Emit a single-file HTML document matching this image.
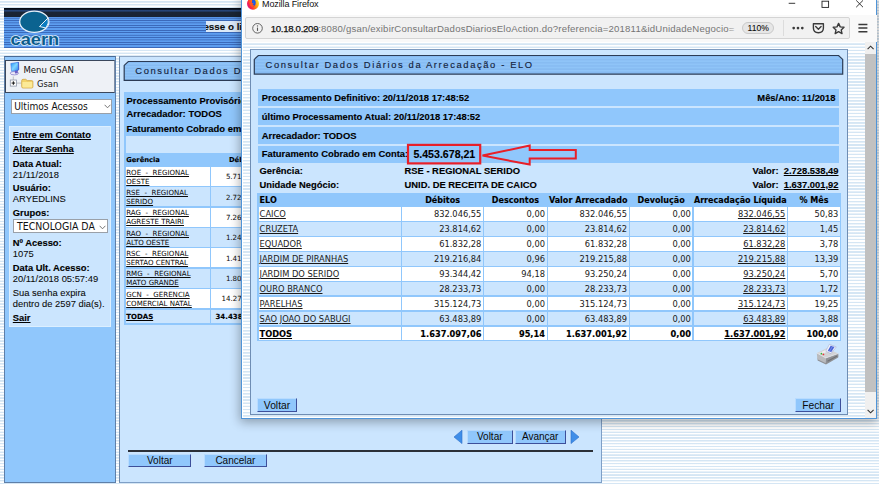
<!DOCTYPE html>
<html lang="pt-BR"><head><meta charset="utf-8"><title>Consultar Dados Diários da Arrecadação - ELO</title>
<style>
*{box-sizing:border-box;margin:0;padding:0}
html,body{width:879px;height:492px;overflow:hidden;background:#fff}
body{position:relative;font-family:"Liberation Sans", Arial, sans-serif;font-size:9.4px;color:#000;line-height:1}
.abs{position:absolute}
.t{position:absolute;white-space:nowrap;line-height:1}
.b{font-weight:bold;-webkit-text-stroke:0.12px currentColor}
.u{text-decoration:underline;text-decoration-thickness:0.7px;text-underline-offset:1px}
.stripe{background:repeating-linear-gradient(to bottom,#ffffff 0,#ffffff 1.0px,#d5e6f4 1.45px,#d5e6f4 2.4px,#ffffff 2.85px)}
.stripe2{background:repeating-linear-gradient(to bottom,#ffffff 0,#ffffff 1.15px,#d5e6f4 1.6px,#d5e6f4 2.7px,#ffffff 3.15px)}
.hstripe{background:repeating-linear-gradient(to bottom,#5d9ef0 0,#5d9ef0 1.15px,#3b69ba 1.5px,#3b69ba 2.1px,#5d9ef0 2.43px)}
.tstripe{background:repeating-linear-gradient(to bottom,#8fc4f8 0,#8fc4f8 1.6px,#80b5ee 2.0px,#80b5ee 2.6px,#8fc4f8 2.9px)}
.btn{position:absolute;background:#90c7fc;border:1px solid;border-color:#b9dcff #3d4f9a #3d4f9a #b9dcff;text-align:center;color:#0a0a0a;white-space:nowrap}
.vd{font-family:"DejaVu Sans", Verdana, sans-serif}
.u2{text-decoration:underline;text-decoration-thickness:0.6px;text-underline-offset:0.8px}
.s2{}
.cell{position:absolute;overflow:hidden;white-space:nowrap}
</style></head>
<body>
<div class="abs stripe" style="left:0;top:0;width:879px;height:484px"></div>
<div class="abs hstripe" style="left:4.3px;top:8.6px;width:300px;height:39.2px"></div>
<div class="abs" style="left:4.30px;top:8.30px;width:300.00px;height:8.30px;background:linear-gradient(to bottom,#05080e 0,#0a1220 1.4px,#27467a 2.2px,#24406e 3.2px,#1a2535 4.2px,#192333 100%);"></div>
<svg class="abs" style="left:4px;top:8px" width="70" height="42" viewBox="0 0 70 42">
<ellipse cx="30.3" cy="13.8" rx="14.6" ry="10.6" fill="#0b6390" stroke="#e8f2fb" stroke-width="1.3"/>
<path d="M35.5 18.5 L44 10 Q45.5 15 42 20 Z" fill="#0a7cc0" stroke="#e8f2fb" stroke-width="1"/>
<text x="6.6" y="36.8" font-family="Liberation Sans, Arial, sans-serif" font-weight="bold" font-size="16" fill="#0b5c8c" stroke="#dfeefa" stroke-width="1.6" paint-order="stroke" textLength="48.6" lengthAdjust="spacingAndGlyphs">caern</text>
</svg>
<div class="abs" style="left:205.9px;top:21.2px;width:60px;height:10.7px;background:#dce9f8;overflow:hidden"><div class="t b" style="left:-15.0px;top:1.10px;font-size:9.8px;color:#0c0c0c">Acesse o link abaixo</div></div>
<div class="abs" style="left:4.30px;top:56.30px;width:111.30px;height:427.00px;background:#90c7fc;border:1px solid #5f7fa8;border-top-color:#4a6a95"></div>
<div class="abs" style="left:5.30px;top:59.60px;width:109.30px;height:33.20px;background:#eef1f6;border:1px solid #3a475c;border-right-color:#7f8ea6"></div>
<div class="t  vd" style="left:23.50px;top:66.40px;font-size:8.5px;color:#111">Menu GSAN</div>
<div class="t  vd" style="left:37.00px;top:80.39px;font-size:8.4px;color:#111">Gsan</div>
<svg class="abs" style="left:8px;top:61px" width="14" height="16" viewBox="0 0 14 16">
<defs><linearGradient id="scr" x1="0" y1="0" x2="1" y2="1"><stop offset="0" stop-color="#1f8ff5"/><stop offset="0.5" stop-color="#7fd6ff"/><stop offset="1" stop-color="#2f86ee"/></linearGradient></defs>
<ellipse cx="6.4" cy="12.2" rx="4.1" ry="1.7" fill="#ecebf8" stroke="#7a70c4" stroke-width="0.7"/>
<path d="M6.6 9.3 L9.6 8.6 L9.8 12.2 L7 12.6Z" fill="#6a5fc4"/>
<path d="M8.6 1.6 L11 1.1 L11.2 8.6 L9.2 10.6 Z" fill="#4f47b4"/>
<path d="M2.8 2.5 L10.2 1.3 L10.3 9 L3.6 10.3 Z" fill="url(#scr)" stroke="#3a78e6" stroke-width="0.6"/>
</svg>
<svg class="abs" style="left:8px;top:76px" width="28" height="15" viewBox="0 0 28 15">
<path d="M5.3 0.5 V4 M8.6 7.1 H13.4" stroke="#a8a8a8" stroke-width="0.7" fill="none"/>
<rect x="2.3" y="4" width="6.1" height="6.1" fill="#fff" stroke="#8d95a8" stroke-width="0.8"/>
<path d="M3.6 7.05 H7.1 M5.35 5.3 V8.8" stroke="#111" stroke-width="1"/>
<path d="M13.7 4.6 Q13.7 3.3 15 3.3 H17.8 L19.2 4.6 H23.7 Q24.9 4.6 24.9 5.8 V10.8 Q24.9 12 23.7 12 H15 Q13.7 12 13.7 10.8 Z" fill="#f3d36a" stroke="#d0a646" stroke-width="0.8"/>
<path d="M14.4 5.9 H24.2 V10.8 Q24.2 11.4 23.6 11.4 H15 Q14.4 11.4 14.4 10.8Z" fill="#fcea98"/>
</svg>
<div class="abs" style="left:10.70px;top:98.50px;width:101.80px;height:15.30px;background:#fff;border:1px solid #9aa0a8"></div>
<div class="t " style="left:14.20px;top:101.95px;font-size:10.1px;font-family:'DejaVu Sans Condensed','DejaVu Sans',sans-serif;font-stretch:condensed;color:#111">Ultimos Acessos</div>
<svg class="abs" style="left:103.5px;top:104px" width="7" height="5" viewBox="0 0 7 5"><path d="M0.6 0.8 L3.5 3.8 L6.4 0.8" fill="none" stroke="#666" stroke-width="0.9"/></svg>
<div class="abs" style="left:9.30px;top:125.70px;width:101.80px;height:200.90px;background:#cbe5fe;border:1px solid #dcefff"></div>
<div class="t b u" style="left:12.80px;top:130.04px;font-size:9.4px;">Entre em Contato</div>
<div class="t b u" style="left:12.80px;top:144.34px;font-size:9.4px;">Alterar Senha</div>
<div class="t b" style="left:12.80px;top:158.54px;font-size:9.4px;">Data Atual:</div>
<div class="t " style="left:12.80px;top:169.64px;font-size:9.4px;color:#0c0c0c;-webkit-text-stroke:0.08px #0c0c0c">21/11/2018</div>
<div class="t b" style="left:12.80px;top:183.04px;font-size:9.4px;">Usuário:</div>
<div class="t " style="left:12.80px;top:194.14px;font-size:9.4px;color:#0c0c0c;-webkit-text-stroke:0.08px #0c0c0c">ARYEDLINS</div>
<div class="t b" style="left:12.80px;top:208.44px;font-size:9.4px;">Grupos:</div>
<div class="abs" style="left:12.50px;top:218.60px;width:95.40px;height:14.90px;background:#fff;border:1px solid #9aa0a8"></div>
<div class="t " style="left:17.00px;top:220.75px;font-size:10.45px;font-family:'DejaVu Sans Condensed','DejaVu Sans',sans-serif;font-stretch:condensed;color:#111">TECNOLOGIA DA</div>
<svg class="abs" style="left:99.3px;top:224.5px" width="7" height="5" viewBox="0 0 7 5"><path d="M0.6 0.8 L3.5 3.8 L6.4 0.8" fill="none" stroke="#666" stroke-width="0.9"/></svg>
<div class="t b" style="left:12.80px;top:238.14px;font-size:9.4px;">Nº Acesso:</div>
<div class="t " style="left:12.80px;top:249.14px;font-size:9.4px;color:#0c0c0c;-webkit-text-stroke:0.08px #0c0c0c">1075</div>
<div class="t b" style="left:12.80px;top:262.84px;font-size:9.4px;">Data Ult. Acesso:</div>
<div class="t " style="left:12.80px;top:273.94px;font-size:9.4px;color:#0c0c0c;-webkit-text-stroke:0.08px #0c0c0c">20/11/2018 05:57:49</div>
<div class="t " style="left:12.80px;top:288.34px;font-size:9.4px;color:#0c0c0c;-webkit-text-stroke:0.08px #0c0c0c">Sua senha expira</div>
<div class="t " style="left:12.80px;top:299.44px;font-size:9.4px;color:#0c0c0c;-webkit-text-stroke:0.08px #0c0c0c">dentro de 2597 dia(s).</div>
<div class="t b u" style="left:12.80px;top:313.14px;font-size:9.4px;">Sair</div>
<div class="abs" style="left:119.10px;top:56.30px;width:482.50px;height:426.60px;background:#cbe5fe;border:1px solid #7f9fc6;border-top-color:#8fa8c6;border-left-color:#6f88a8"></div>
<svg class="abs" style="left:123px;top:60px" width="200" height="22" viewBox="0 0 200 22">
<defs><pattern id="ts" width="10" height="2.9" patternUnits="userSpaceOnUse"><rect width="10" height="2.9" fill="#8fc4f8"/><rect y="1.8" width="10" height="0.9" fill="#80b5ee"/></pattern></defs>
<path d="M1.2 20.3 V5.4 L5.3 1.5 H200 V20.3 Z" fill="url(#ts)" stroke="#2b3b55" stroke-width="1.2"/>
</svg>
<div class="t " style="left:135.30px;top:66.34px;font-size:9.4px;letter-spacing:1.62px;color:#14233d;-webkit-text-stroke:0.15px #14233d">Consultar Dados Diários da Arrecadação</div>
<div class="abs" style="left:124.20px;top:92.30px;width:200.00px;height:43.40px;background:#90c7fc;"></div>
<div class="t b" style="left:126.50px;top:96.10px;font-size:9.45px;">Processamento Provisório: 21/11/2018</div>
<div class="t b" style="left:126.50px;top:109.30px;font-size:9.45px;">Arrecadador: TODOS</div>
<div class="t b" style="left:126.50px;top:124.10px;font-size:9.45px;">Faturamento Cobrado em Conta:</div>
<div class="abs" style="left:124.20px;top:135.70px;width:200.00px;height:17.70px;background:#90c7fc;"></div>
<div class="abs" style="left:125.50px;top:136.30px;width:200.00px;height:16.60px;background:#cde6fe;"></div>
<div class="abs" style="left:124.20px;top:153.30px;width:200.00px;height:171.60px;background:#90c7fc;"></div>
<div class="t b vd" style="left:126.20px;top:157.29px;font-size:6.75px;">Gerência</div>
<div class="t b vd" style="left:229.00px;top:157.29px;font-size:6.75px;">Débitos</div>
<div class="abs" style="left:125.60px;top:167.00px;width:84.20px;height:18.90px;background:#fff;"></div>
<div class="abs" style="left:211.00px;top:167.00px;width:120.00px;height:18.90px;background:#fff;"></div>
<div class="t u2 vd" style="left:126.20px;top:168.73px;font-size:7.05px;color:#0a0a0a">ROE &nbsp;- &nbsp;REGIONAL</div>
<div class="t u2 vd" style="left:126.20px;top:177.53px;font-size:7.05px;color:#0a0a0a">OESTE</div>
<div class="t s2 vd" style="left:225.90px;top:173.23px;font-size:7.05px;color:#0a0a0a">5.717.270,46</div>
<div class="abs" style="left:125.60px;top:187.33px;width:84.20px;height:18.90px;background:#cbe5fe;"></div>
<div class="abs" style="left:211.00px;top:187.33px;width:120.00px;height:18.90px;background:#cbe5fe;"></div>
<div class="t u2 vd" style="left:126.20px;top:189.06px;font-size:7.05px;color:#0a0a0a">RSE &nbsp;- &nbsp;REGIONAL</div>
<div class="t u2 vd" style="left:126.20px;top:197.86px;font-size:7.05px;color:#0a0a0a">SERIDO</div>
<div class="t s2 vd" style="left:225.90px;top:193.56px;font-size:7.05px;color:#0a0a0a">2.728.635,59</div>
<div class="abs" style="left:125.60px;top:207.66px;width:84.20px;height:18.90px;background:#fff;"></div>
<div class="abs" style="left:211.00px;top:207.66px;width:120.00px;height:18.90px;background:#fff;"></div>
<div class="t u2 vd" style="left:126.20px;top:209.39px;font-size:7.05px;color:#0a0a0a">RAG &nbsp;- &nbsp;REGIONAL</div>
<div class="t u2 vd" style="left:126.20px;top:218.19px;font-size:7.05px;color:#0a0a0a">AGRESTE TRAIRI</div>
<div class="t s2 vd" style="left:225.90px;top:213.89px;font-size:7.05px;color:#0a0a0a">7.261.845,03</div>
<div class="abs" style="left:125.60px;top:227.99px;width:84.20px;height:18.90px;background:#cbe5fe;"></div>
<div class="abs" style="left:211.00px;top:227.99px;width:120.00px;height:18.90px;background:#cbe5fe;"></div>
<div class="t u2 vd" style="left:126.20px;top:229.72px;font-size:7.05px;color:#0a0a0a">RAO &nbsp;- &nbsp;REGIONAL</div>
<div class="t u2 vd" style="left:126.20px;top:238.52px;font-size:7.05px;color:#0a0a0a">ALTO OESTE</div>
<div class="t s2 vd" style="left:225.90px;top:234.22px;font-size:7.05px;color:#0a0a0a">1.244.102,77</div>
<div class="abs" style="left:125.60px;top:248.32px;width:84.20px;height:18.90px;background:#fff;"></div>
<div class="abs" style="left:211.00px;top:248.32px;width:120.00px;height:18.90px;background:#fff;"></div>
<div class="t u2 vd" style="left:126.20px;top:250.05px;font-size:7.05px;color:#0a0a0a">RSC &nbsp;- &nbsp;REGIONAL</div>
<div class="t u2 vd" style="left:126.20px;top:258.85px;font-size:7.05px;color:#0a0a0a">SERTAO CENTRAL</div>
<div class="t s2 vd" style="left:225.90px;top:254.55px;font-size:7.05px;color:#0a0a0a">1.412.904,18</div>
<div class="abs" style="left:125.60px;top:268.65px;width:84.20px;height:18.90px;background:#cbe5fe;"></div>
<div class="abs" style="left:211.00px;top:268.65px;width:120.00px;height:18.90px;background:#cbe5fe;"></div>
<div class="t u2 vd" style="left:126.20px;top:270.38px;font-size:7.05px;color:#0a0a0a">RMG &nbsp;- &nbsp;REGIONAL</div>
<div class="t u2 vd" style="left:126.20px;top:279.18px;font-size:7.05px;color:#0a0a0a">MATO GRANDE</div>
<div class="t s2 vd" style="left:225.90px;top:274.88px;font-size:7.05px;color:#0a0a0a">1.803.377,25</div>
<div class="abs" style="left:125.60px;top:288.98px;width:84.20px;height:18.90px;background:#fff;"></div>
<div class="abs" style="left:211.00px;top:288.98px;width:120.00px;height:18.90px;background:#fff;"></div>
<div class="t u2 vd" style="left:126.20px;top:290.71px;font-size:7.05px;color:#0a0a0a">GCN &nbsp;- &nbsp;GERENCIA</div>
<div class="t u2 vd" style="left:126.20px;top:299.51px;font-size:7.05px;color:#0a0a0a">COMERCIAL NATAL</div>
<div class="t s2 vd" style="left:221.50px;top:295.21px;font-size:7.05px;color:#0a0a0a">14.270.512,90</div>
<div class="abs" style="left:125.60px;top:310.21px;width:84.20px;height:13.20px;background:#cbe5fe;"></div>
<div class="abs" style="left:211.00px;top:310.21px;width:120.00px;height:13.20px;background:#cbe5fe;"></div>
<div class="t b u vd" style="left:126.20px;top:313.98px;font-size:7.0px;">TODAS</div>
<div class="t b vd" style="left:215.50px;top:313.98px;font-size:7.0px;">34.438.648,18</div>
<div class="abs" style="left:128.00px;top:450.00px;width:464.50px;height:1.80px;background:#2b3038;"></div>
<div class="btn" style="left:128.3px;top:453.8px;width:63px;height:13.3px;font-size:10px;line-height:11.3px">Voltar</div>
<div class="btn" style="left:203.8px;top:453.8px;width:63.2px;height:13.3px;font-size:10px;line-height:11.3px">Cancelar</div>
<div class="btn" style="left:467px;top:430.3px;width:45.5px;height:13.6px;font-size:10px;line-height:11.6px">Voltar</div>
<div class="btn" style="left:514.5px;top:430.3px;width:51.3px;height:13.6px;font-size:10px;line-height:11.6px">Avançar</div>
<svg class="abs" style="left:453px;top:429px" width="10" height="16" viewBox="0 0 10 16"><path d="M9 1.2 V14.6 L1 8 Z" fill="#3f8ee8" stroke="#2d6fca" stroke-width="0.6"/></svg>
<svg class="abs" style="left:569.5px;top:429px" width="10" height="16" viewBox="0 0 10 16"><path d="M1 1.2 V14.6 L9 8 Z" fill="#3f8ee8" stroke="#2d6fca" stroke-width="0.6"/></svg>
<div class="abs" id="ff" style="left:241.3px;top:-2px;width:636.2px;height:420.6px;background:#fff;border:1.2px solid #4f94d8;box-shadow:0 2px 10px 1px rgba(0,0,0,0.32);overflow:hidden"></div>
<svg class="abs" style="left:246px;top:0" width="14" height="11" viewBox="0 0 14 11">
<defs><linearGradient id="fx" x1="1" y1="0.15" x2="0" y2="0.65"><stop offset="0" stop-color="#fff04a"/><stop offset="0.25" stop-color="#ffc01a"/><stop offset="0.5" stop-color="#ff7a12"/><stop offset="0.75" stop-color="#ff2f35"/><stop offset="1" stop-color="#dc1580"/></linearGradient>
<radialGradient id="fb" cx="0.55" cy="0.45" r="0.6"><stop offset="0" stop-color="#0a70f5"/><stop offset="1" stop-color="#3535c8"/></radialGradient></defs>
<circle cx="7" cy="3.7" r="6" fill="url(#fx)"/>
<path d="M6 -1 Q10 -0.6 9.7 3 Q9.5 6.3 7.2 6.6 Q5.2 6.2 5.3 4.2 Q6.5 2.6 6 -1Z" fill="url(#fb)"/>
<path d="M3.2 0.8 Q4.8 1.4 5.5 3 Q6.9 2.8 7.9 3.7 Q6.7 4 6.5 4.8 Q7.5 5.6 8.9 5.1 Q8.2 7 6 6.9 Q3.4 6.2 3.2 0.8Z" fill="#ff5722"/>
</svg>
<div class="t " style="left:262.00px;top:0.48px;font-size:9.0px;color:#111;letter-spacing:-0.1px">Mozilla Firefox</div>
<svg class="abs" style="left:785px;top:0" width="90" height="10" viewBox="0 0 90 10">
<path d="M3.7 3.3 H10.2" stroke="#222" stroke-width="0.9"/>
<rect x="37" y="1.2" width="6.6" height="6.2" fill="none" stroke="#222" stroke-width="0.9"/>
<path d="M71.2 0.4 L78 7.2 M78 0.4 L71.2 7.2" stroke="#222" stroke-width="0.9"/>
</svg>
<div class="abs" style="left:242.50px;top:14.80px;width:634.00px;height:27.00px;background:#f9f9f9;"></div>
<div class="abs" style="left:245.30px;top:17.20px;width:604.60px;height:21.40px;background:#f1f1f1;border:1px solid #d4d4d4;border-radius:2px"></div>
<svg class="abs" style="left:251px;top:22px" width="13" height="13" viewBox="0 0 13 13">
<circle cx="6.5" cy="6.3" r="4.8" fill="none" stroke="#555" stroke-width="0.9"/>
<path d="M6.5 5.6 V8.9" stroke="#555" stroke-width="1.1"/><circle cx="6.5" cy="3.9" r="0.7" fill="#555"/></svg>
<div class="t" style="left:270.7px;top:23.67px;font-size:9.6px;color:#757575;letter-spacing:0.18px"><span style="color:#111;-webkit-text-stroke:0.25px #111;letter-spacing:-0.29px">10.18.0.209</span>:8080/gsan/exibirConsultarDadosDiariosEloAction.do?referencia=201811&amp;idUnidadeNegocio=</div>
<div class="abs" style="left:728.00px;top:19.00px;width:21.00px;height:18.00px;background:linear-gradient(to right,rgba(241,241,241,0),#f1f1f1 70%);"></div>
<div class="abs" style="left:741.70px;top:22.20px;width:32.40px;height:12.20px;background:#e6e6e6;border:1px solid #c9c9c9;border-radius:6.5px"></div>
<div class="t " style="left:747.50px;top:24.32px;font-size:8.6px;color:#0c0c0c;-webkit-text-stroke:0.08px #0c0c0c">110%</div>
<div class="abs" style="left:783.00px;top:20.00px;width:1.00px;height:16.00px;background:#dcdcdc;"></div>
<svg class="abs" style="left:788px;top:19px" width="86" height="18" viewBox="0 0 86 18">
<circle cx="5.7" cy="9.1" r="1.35" fill="#3a3a3a"/><circle cx="10" cy="9.1" r="1.35" fill="#3a3a3a"/><circle cx="14.3" cy="9.1" r="1.35" fill="#3a3a3a"/>
<path d="M25.4 4.7 H35.4 V9 Q35.4 13.7 30.4 13.7 Q25.4 13.7 25.4 9 Z" fill="none" stroke="#3a3a3a" stroke-width="1.4" stroke-linejoin="round"/>
<path d="M27.7 7.6 L30.4 10.2 L33.1 7.6" fill="none" stroke="#3a3a3a" stroke-width="1.4" stroke-linecap="round" stroke-linejoin="round"/>
<path d="M50.6 4.4 L52.2 7.9 L56 8.3 L53.2 10.9 L54 14.6 L50.6 12.7 L47.2 14.6 L48 10.9 L45.2 8.3 L49 7.9 Z" fill="none" stroke="#3a3a3a" stroke-width="1.4" stroke-linejoin="round"/>
<path d="M70.4 5.6 H79.4 M70.4 9.1 H79.4 M70.4 12.7 H79.4" stroke="#3a3a3a" stroke-width="1.5"/>
</svg>
<div class="abs stripe2" style="left:242.5px;top:41.8px;width:622.5px;height:376px"></div>
<div class="abs" style="left:865.00px;top:41.80px;width:11.30px;height:376.00px;background:#f0f0f0;"></div>
<div class="abs" style="left:865.00px;top:54.20px;width:11.30px;height:338.00px;background:#c1c1c1;"></div>
<svg class="abs" style="left:865px;top:42px" width="11" height="12" viewBox="0 0 11 12"><path d="M2.6 7.2 L5.6 4.2 L8.6 7.2" fill="none" stroke="#333" stroke-width="1.1"/></svg>
<svg class="abs" style="left:865px;top:405px" width="11" height="12" viewBox="0 0 11 12"><path d="M2.6 4.8 L5.6 7.8 L8.6 4.8" fill="none" stroke="#333" stroke-width="1.1"/></svg>
<div class="abs" style="left:250.20px;top:49.30px;width:597.70px;height:365.30px;background:#cbe5fe;border:1px solid #6f8db3;border-top-color:#7f9cc0"></div>
<svg class="abs" style="left:253px;top:53.5px" width="592" height="22" viewBox="0 0 592 22">
<defs><pattern id="ts2" width="10" height="3.15" patternUnits="userSpaceOnUse"><rect width="10" height="3.15" fill="#8fc4f8"/><rect y="2" width="10" height="0.9" fill="#80b5ee"/></pattern></defs>
<path d="M1.3 20.1 V5.4 L5.3 1.5 H585.6 L589.7 5.4 V20.1 Z" fill="url(#ts2)" stroke="#2b3b55" stroke-width="1.2"/>
</svg>
<div class="t " style="left:265.50px;top:59.64px;font-size:9.4px;letter-spacing:1.62px;color:#14233d;-webkit-text-stroke:0.15px #14233d">Consultar Dados Diários da Arrecadação - ELO</div>
<div class="abs" style="left:258.30px;top:89.40px;width:580.80px;height:16.80px;background:#90c7fc;"></div>
<div class="abs" style="left:258.30px;top:108.30px;width:580.80px;height:16.80px;background:#90c7fc;"></div>
<div class="abs" style="left:258.30px;top:127.20px;width:580.80px;height:16.80px;background:#90c7fc;"></div>
<div class="abs" style="left:258.30px;top:146.10px;width:580.80px;height:16.80px;background:#90c7fc;"></div>
<div class="t b" style="left:261.80px;top:93.04px;font-size:9.4px;">Processamento Definitivo: 20/11/2018 17:48:52</div>
<div class="t b" style="right:43.50px;top:93.04px;font-size:9.4px;">Mês/Ano: 11/2018</div>
<div class="t b" style="left:261.80px;top:111.84px;font-size:9.4px;">último Processamento Atual: 20/11/2018 17:48:52</div>
<div class="t b" style="left:261.80px;top:130.74px;font-size:9.4px;">Arrecadador: TODOS</div>
<div class="t b" style="left:261.80px;top:149.34px;font-size:9.4px;">Faturamento Cobrado em Conta:</div>
<div class="t b" style="left:413.40px;top:149.33px;font-size:10.6px;">5.453.678,21</div>
<svg class="abs" style="left:400px;top:140px" width="185" height="30" viewBox="0 0 185 30">
<rect x="8" y="4.9" width="72.2" height="18.5" fill="none" stroke="#e81f28" stroke-width="2.2"/>
<path d="M82.5 15.5 L129.7 5.6 V9.9 H175.8 V18.6 H129.7 V24.6 Z" fill="none" stroke="#e81f28" stroke-width="2" stroke-linejoin="miter"/>
</svg>
<div class="t b" style="left:259.50px;top:166.04px;font-size:9.4px;">Gerência:</div>
<div class="t b" style="left:404.50px;top:166.04px;font-size:9.4px;">RSE - REGIONAL SERIDO</div>
<div class="t b" style="left:259.50px;top:179.94px;font-size:9.4px;">Unidade Negócio:</div>
<div class="t b" style="left:404.50px;top:179.94px;font-size:9.4px;">UNID. DE RECEITA DE CAICO</div>
<div class="t b" style="right:40.50px;top:166.04px;font-size:9.4px;">Valor: &nbsp;<span class="u">2.728.538,49</span></div>
<div class="t b" style="right:40.50px;top:179.94px;font-size:9.4px;">Valor: &nbsp;<span class="u">1.637.001,92</span></div>
<div class="abs" style="left:257.30px;top:193.00px;width:583.60px;height:148.40px;background:#90c7fc;"></div>
<div class="t b vd" style="left:259.60px;top:196.79px;font-size:8.05px;">ELO</div>
<div class="t vd b" style="left:342.60px;width:200px;text-align:center;top:196.79px;font-size:8.05px">Débitos</div>
<div class="t vd b" style="left:415.40px;width:200px;text-align:center;top:196.79px;font-size:8.05px">Descontos</div>
<div class="t vd b" style="left:488.20px;width:200px;text-align:center;top:196.79px;font-size:8.05px">Valor Arrecadado</div>
<div class="t vd b" style="left:561.15px;width:200px;text-align:center;top:196.79px;font-size:8.05px">Devolução</div>
<div class="t vd b" style="left:640.35px;width:200px;text-align:center;top:196.79px;font-size:8.05px">Arrecadação Líquida</div>
<div class="t vd b" style="left:714.05px;width:200px;text-align:center;top:196.79px;font-size:8.05px">% Mês</div>
<div class="abs" style="left:258.55px;top:207.25px;width:142.45px;height:13.60px;background:#fff;"></div>
<div class="abs" style="left:402.25px;top:207.25px;width:80.75px;height:13.60px;background:#fff;"></div>
<div class="abs" style="left:484.25px;top:207.25px;width:62.35px;height:13.60px;background:#fff;"></div>
<div class="abs" style="left:547.85px;top:207.25px;width:80.75px;height:13.60px;background:#fff;"></div>
<div class="abs" style="left:629.85px;top:207.25px;width:62.65px;height:13.60px;background:#fff;"></div>
<div class="abs" style="left:693.75px;top:207.25px;width:93.25px;height:13.60px;background:#fff;"></div>
<div class="abs" style="left:788.25px;top:207.25px;width:51.65px;height:13.60px;background:#fff;"></div>
<div class="t  u vd" style="left:259.60px;top:210.22px;font-size:8.3px;color:#1a1a1a">CAICO</div>
<div class="t  vd" style="right:397.60px;top:210.22px;font-size:8.3px;color:#1a1a1a">832.046,55</div>
<div class="t  vd" style="right:334.00px;top:210.22px;font-size:8.3px;color:#1a1a1a">0,00</div>
<div class="t  vd" style="right:252.00px;top:210.22px;font-size:8.3px;color:#1a1a1a">832.046,55</div>
<div class="t  vd" style="right:188.10px;top:210.22px;font-size:8.3px;color:#1a1a1a">0,00</div>
<div class="t  vd" style="right:93.60px;top:210.22px;font-size:8.3px;color:#1a1a1a"><span class="u">832.046,55</span></div>
<div class="t  vd" style="right:40.70px;top:210.22px;font-size:8.3px;color:#1a1a1a">50,83</div>
<div class="abs" style="left:258.55px;top:222.18px;width:142.45px;height:13.60px;background:#cbe5fe;"></div>
<div class="abs" style="left:402.25px;top:222.18px;width:80.75px;height:13.60px;background:#cbe5fe;"></div>
<div class="abs" style="left:484.25px;top:222.18px;width:62.35px;height:13.60px;background:#cbe5fe;"></div>
<div class="abs" style="left:547.85px;top:222.18px;width:80.75px;height:13.60px;background:#cbe5fe;"></div>
<div class="abs" style="left:629.85px;top:222.18px;width:62.65px;height:13.60px;background:#cbe5fe;"></div>
<div class="abs" style="left:693.75px;top:222.18px;width:93.25px;height:13.60px;background:#cbe5fe;"></div>
<div class="abs" style="left:788.25px;top:222.18px;width:51.65px;height:13.60px;background:#cbe5fe;"></div>
<div class="t  u vd" style="left:259.60px;top:225.15px;font-size:8.3px;color:#1a1a1a">CRUZETA</div>
<div class="t  vd" style="right:397.60px;top:225.15px;font-size:8.3px;color:#1a1a1a">23.814,62</div>
<div class="t  vd" style="right:334.00px;top:225.15px;font-size:8.3px;color:#1a1a1a">0,00</div>
<div class="t  vd" style="right:252.00px;top:225.15px;font-size:8.3px;color:#1a1a1a">23.814,62</div>
<div class="t  vd" style="right:188.10px;top:225.15px;font-size:8.3px;color:#1a1a1a">0,00</div>
<div class="t  vd" style="right:93.60px;top:225.15px;font-size:8.3px;color:#1a1a1a"><span class="u">23.814,62</span></div>
<div class="t  vd" style="right:40.70px;top:225.15px;font-size:8.3px;color:#1a1a1a">1,45</div>
<div class="abs" style="left:258.55px;top:237.11px;width:142.45px;height:13.60px;background:#fff;"></div>
<div class="abs" style="left:402.25px;top:237.11px;width:80.75px;height:13.60px;background:#fff;"></div>
<div class="abs" style="left:484.25px;top:237.11px;width:62.35px;height:13.60px;background:#fff;"></div>
<div class="abs" style="left:547.85px;top:237.11px;width:80.75px;height:13.60px;background:#fff;"></div>
<div class="abs" style="left:629.85px;top:237.11px;width:62.65px;height:13.60px;background:#fff;"></div>
<div class="abs" style="left:693.75px;top:237.11px;width:93.25px;height:13.60px;background:#fff;"></div>
<div class="abs" style="left:788.25px;top:237.11px;width:51.65px;height:13.60px;background:#fff;"></div>
<div class="t  u vd" style="left:259.60px;top:240.08px;font-size:8.3px;color:#1a1a1a">EQUADOR</div>
<div class="t  vd" style="right:397.60px;top:240.08px;font-size:8.3px;color:#1a1a1a">61.832,28</div>
<div class="t  vd" style="right:334.00px;top:240.08px;font-size:8.3px;color:#1a1a1a">0,00</div>
<div class="t  vd" style="right:252.00px;top:240.08px;font-size:8.3px;color:#1a1a1a">61.832,28</div>
<div class="t  vd" style="right:188.10px;top:240.08px;font-size:8.3px;color:#1a1a1a">0,00</div>
<div class="t  vd" style="right:93.60px;top:240.08px;font-size:8.3px;color:#1a1a1a"><span class="u">61.832,28</span></div>
<div class="t  vd" style="right:40.70px;top:240.08px;font-size:8.3px;color:#1a1a1a">3,78</div>
<div class="abs" style="left:258.55px;top:252.04px;width:142.45px;height:13.60px;background:#cbe5fe;"></div>
<div class="abs" style="left:402.25px;top:252.04px;width:80.75px;height:13.60px;background:#cbe5fe;"></div>
<div class="abs" style="left:484.25px;top:252.04px;width:62.35px;height:13.60px;background:#cbe5fe;"></div>
<div class="abs" style="left:547.85px;top:252.04px;width:80.75px;height:13.60px;background:#cbe5fe;"></div>
<div class="abs" style="left:629.85px;top:252.04px;width:62.65px;height:13.60px;background:#cbe5fe;"></div>
<div class="abs" style="left:693.75px;top:252.04px;width:93.25px;height:13.60px;background:#cbe5fe;"></div>
<div class="abs" style="left:788.25px;top:252.04px;width:51.65px;height:13.60px;background:#cbe5fe;"></div>
<div class="t  u vd" style="left:259.60px;top:255.01px;font-size:8.3px;color:#1a1a1a">JARDIM DE PIRANHAS</div>
<div class="t  vd" style="right:397.60px;top:255.01px;font-size:8.3px;color:#1a1a1a">219.216,84</div>
<div class="t  vd" style="right:334.00px;top:255.01px;font-size:8.3px;color:#1a1a1a">0,96</div>
<div class="t  vd" style="right:252.00px;top:255.01px;font-size:8.3px;color:#1a1a1a">219.215,88</div>
<div class="t  vd" style="right:188.10px;top:255.01px;font-size:8.3px;color:#1a1a1a">0,00</div>
<div class="t  vd" style="right:93.60px;top:255.01px;font-size:8.3px;color:#1a1a1a"><span class="u">219.215,88</span></div>
<div class="t  vd" style="right:40.70px;top:255.01px;font-size:8.3px;color:#1a1a1a">13,39</div>
<div class="abs" style="left:258.55px;top:266.97px;width:142.45px;height:13.60px;background:#fff;"></div>
<div class="abs" style="left:402.25px;top:266.97px;width:80.75px;height:13.60px;background:#fff;"></div>
<div class="abs" style="left:484.25px;top:266.97px;width:62.35px;height:13.60px;background:#fff;"></div>
<div class="abs" style="left:547.85px;top:266.97px;width:80.75px;height:13.60px;background:#fff;"></div>
<div class="abs" style="left:629.85px;top:266.97px;width:62.65px;height:13.60px;background:#fff;"></div>
<div class="abs" style="left:693.75px;top:266.97px;width:93.25px;height:13.60px;background:#fff;"></div>
<div class="abs" style="left:788.25px;top:266.97px;width:51.65px;height:13.60px;background:#fff;"></div>
<div class="t  u vd" style="left:259.60px;top:269.94px;font-size:8.3px;color:#1a1a1a">JARDIM DO SERIDO</div>
<div class="t  vd" style="right:397.60px;top:269.94px;font-size:8.3px;color:#1a1a1a">93.344,42</div>
<div class="t  vd" style="right:334.00px;top:269.94px;font-size:8.3px;color:#1a1a1a">94,18</div>
<div class="t  vd" style="right:252.00px;top:269.94px;font-size:8.3px;color:#1a1a1a">93.250,24</div>
<div class="t  vd" style="right:188.10px;top:269.94px;font-size:8.3px;color:#1a1a1a">0,00</div>
<div class="t  vd" style="right:93.60px;top:269.94px;font-size:8.3px;color:#1a1a1a"><span class="u">93.250,24</span></div>
<div class="t  vd" style="right:40.70px;top:269.94px;font-size:8.3px;color:#1a1a1a">5,70</div>
<div class="abs" style="left:258.55px;top:281.90px;width:142.45px;height:13.60px;background:#cbe5fe;"></div>
<div class="abs" style="left:402.25px;top:281.90px;width:80.75px;height:13.60px;background:#cbe5fe;"></div>
<div class="abs" style="left:484.25px;top:281.90px;width:62.35px;height:13.60px;background:#cbe5fe;"></div>
<div class="abs" style="left:547.85px;top:281.90px;width:80.75px;height:13.60px;background:#cbe5fe;"></div>
<div class="abs" style="left:629.85px;top:281.90px;width:62.65px;height:13.60px;background:#cbe5fe;"></div>
<div class="abs" style="left:693.75px;top:281.90px;width:93.25px;height:13.60px;background:#cbe5fe;"></div>
<div class="abs" style="left:788.25px;top:281.90px;width:51.65px;height:13.60px;background:#cbe5fe;"></div>
<div class="t  u vd" style="left:259.60px;top:284.87px;font-size:8.3px;color:#1a1a1a">OURO BRANCO</div>
<div class="t  vd" style="right:397.60px;top:284.87px;font-size:8.3px;color:#1a1a1a">28.233,73</div>
<div class="t  vd" style="right:334.00px;top:284.87px;font-size:8.3px;color:#1a1a1a">0,00</div>
<div class="t  vd" style="right:252.00px;top:284.87px;font-size:8.3px;color:#1a1a1a">28.233,73</div>
<div class="t  vd" style="right:188.10px;top:284.87px;font-size:8.3px;color:#1a1a1a">0,00</div>
<div class="t  vd" style="right:93.60px;top:284.87px;font-size:8.3px;color:#1a1a1a"><span class="u">28.233,73</span></div>
<div class="t  vd" style="right:40.70px;top:284.87px;font-size:8.3px;color:#1a1a1a">1,72</div>
<div class="abs" style="left:258.55px;top:296.83px;width:142.45px;height:13.60px;background:#fff;"></div>
<div class="abs" style="left:402.25px;top:296.83px;width:80.75px;height:13.60px;background:#fff;"></div>
<div class="abs" style="left:484.25px;top:296.83px;width:62.35px;height:13.60px;background:#fff;"></div>
<div class="abs" style="left:547.85px;top:296.83px;width:80.75px;height:13.60px;background:#fff;"></div>
<div class="abs" style="left:629.85px;top:296.83px;width:62.65px;height:13.60px;background:#fff;"></div>
<div class="abs" style="left:693.75px;top:296.83px;width:93.25px;height:13.60px;background:#fff;"></div>
<div class="abs" style="left:788.25px;top:296.83px;width:51.65px;height:13.60px;background:#fff;"></div>
<div class="t  u vd" style="left:259.60px;top:299.80px;font-size:8.3px;color:#1a1a1a">PARELHAS</div>
<div class="t  vd" style="right:397.60px;top:299.80px;font-size:8.3px;color:#1a1a1a">315.124,73</div>
<div class="t  vd" style="right:334.00px;top:299.80px;font-size:8.3px;color:#1a1a1a">0,00</div>
<div class="t  vd" style="right:252.00px;top:299.80px;font-size:8.3px;color:#1a1a1a">315.124,73</div>
<div class="t  vd" style="right:188.10px;top:299.80px;font-size:8.3px;color:#1a1a1a">0,00</div>
<div class="t  vd" style="right:93.60px;top:299.80px;font-size:8.3px;color:#1a1a1a"><span class="u">315.124,73</span></div>
<div class="t  vd" style="right:40.70px;top:299.80px;font-size:8.3px;color:#1a1a1a">19,25</div>
<div class="abs" style="left:258.55px;top:311.76px;width:142.45px;height:13.60px;background:#cbe5fe;"></div>
<div class="abs" style="left:402.25px;top:311.76px;width:80.75px;height:13.60px;background:#cbe5fe;"></div>
<div class="abs" style="left:484.25px;top:311.76px;width:62.35px;height:13.60px;background:#cbe5fe;"></div>
<div class="abs" style="left:547.85px;top:311.76px;width:80.75px;height:13.60px;background:#cbe5fe;"></div>
<div class="abs" style="left:629.85px;top:311.76px;width:62.65px;height:13.60px;background:#cbe5fe;"></div>
<div class="abs" style="left:693.75px;top:311.76px;width:93.25px;height:13.60px;background:#cbe5fe;"></div>
<div class="abs" style="left:788.25px;top:311.76px;width:51.65px;height:13.60px;background:#cbe5fe;"></div>
<div class="t  u vd" style="left:259.60px;top:314.73px;font-size:8.3px;color:#1a1a1a">SAO JOAO DO SABUGI</div>
<div class="t  vd" style="right:397.60px;top:314.73px;font-size:8.3px;color:#1a1a1a">63.483,89</div>
<div class="t  vd" style="right:334.00px;top:314.73px;font-size:8.3px;color:#1a1a1a">0,00</div>
<div class="t  vd" style="right:252.00px;top:314.73px;font-size:8.3px;color:#1a1a1a">63.483,89</div>
<div class="t  vd" style="right:188.10px;top:314.73px;font-size:8.3px;color:#1a1a1a">0,00</div>
<div class="t  vd" style="right:93.60px;top:314.73px;font-size:8.3px;color:#1a1a1a"><span class="u">63.483,89</span></div>
<div class="t  vd" style="right:40.70px;top:314.73px;font-size:8.3px;color:#1a1a1a">3,88</div>
<div class="abs" style="left:258.55px;top:326.69px;width:142.45px;height:13.60px;background:#fff;"></div>
<div class="abs" style="left:402.25px;top:326.69px;width:80.75px;height:13.60px;background:#fff;"></div>
<div class="abs" style="left:484.25px;top:326.69px;width:62.35px;height:13.60px;background:#fff;"></div>
<div class="abs" style="left:547.85px;top:326.69px;width:80.75px;height:13.60px;background:#fff;"></div>
<div class="abs" style="left:629.85px;top:326.69px;width:62.65px;height:13.60px;background:#fff;"></div>
<div class="abs" style="left:693.75px;top:326.69px;width:93.25px;height:13.60px;background:#fff;"></div>
<div class="abs" style="left:788.25px;top:326.69px;width:51.65px;height:13.60px;background:#fff;"></div>
<div class="t b u vd" style="left:259.60px;top:329.71px;font-size:8.25px;">TODOS</div>
<div class="t b vd" style="right:397.60px;top:329.71px;font-size:8.25px;">1.637.097,06</div>
<div class="t b vd" style="right:334.00px;top:329.71px;font-size:8.25px;">95,14</div>
<div class="t b vd" style="right:252.00px;top:329.71px;font-size:8.25px;">1.637.001,92</div>
<div class="t b vd" style="right:188.10px;top:329.71px;font-size:8.25px;">0,00</div>
<div class="t b vd" style="right:93.60px;top:329.71px;font-size:8.25px;"><span class="u">1.637.001,92</span></div>
<div class="t b vd" style="right:40.70px;top:329.71px;font-size:8.25px;">100,00</div>
<svg class="abs" style="left:808px;top:336px" width="40" height="36" viewBox="0 0 40 36">
<path d="M9.6 24.4 L18 28.6 L30.2 21.6 L30.2 19.5 L18 25.5 L9.6 21.6Z" fill="#8e9094"/>
<path d="M8.8 17 L17.9 22 L17.9 27.2 L9.4 23.2 Z" fill="#b9babd"/>
<path d="M17.9 22 L30.3 17.6 L30.3 20.6 L17.9 27.2 Z" fill="#8f9195"/>
<path d="M8.8 17 L18.6 12.2 L30.3 17.6 L17.9 22 Z" fill="#d2d3d6"/>
<path d="M11.2 17.1 L18.5 13.6 L21 14.8 L13.8 18.4Z" fill="#eceef0"/>
<path d="M17.8 15.2 L21.4 8.3 L28.3 10.9 L23 17.6 Z" fill="#f7f8fc" stroke="#9aa3c8" stroke-width="0.5"/>
<path d="M19.6 14.9 L22.6 9.6 L26.6 11.1 L23.4 16.2Z" fill="#6f86e8"/><path d="M20.6 14.8 L23.4 10.2 M22.6 15.4 L25.4 10.9" stroke="#3550c8" stroke-width="0.8"/>
<circle cx="13.4" cy="17.7" r="0.9" fill="#35b23a"/><circle cx="15.4" cy="18.4" r="0.9" fill="#e23a3a"/>
<path d="M19.5 25.2 L29.2 20" stroke="#6f7175" stroke-width="1.1"/>
<path d="M8.8 17 L17.9 22 L30.3 17.6" fill="none" stroke="#f2f3f5" stroke-width="0.5"/>
</svg>
<div class="btn" style="left:257px;top:398.4px;width:40px;height:13.7px;font-size:10.3px;line-height:14.5px">Voltar</div>
<div class="btn" style="left:795.2px;top:398.4px;width:46px;height:13.7px;font-size:10.3px;line-height:14.5px">Fechar</div>
</body></html>
